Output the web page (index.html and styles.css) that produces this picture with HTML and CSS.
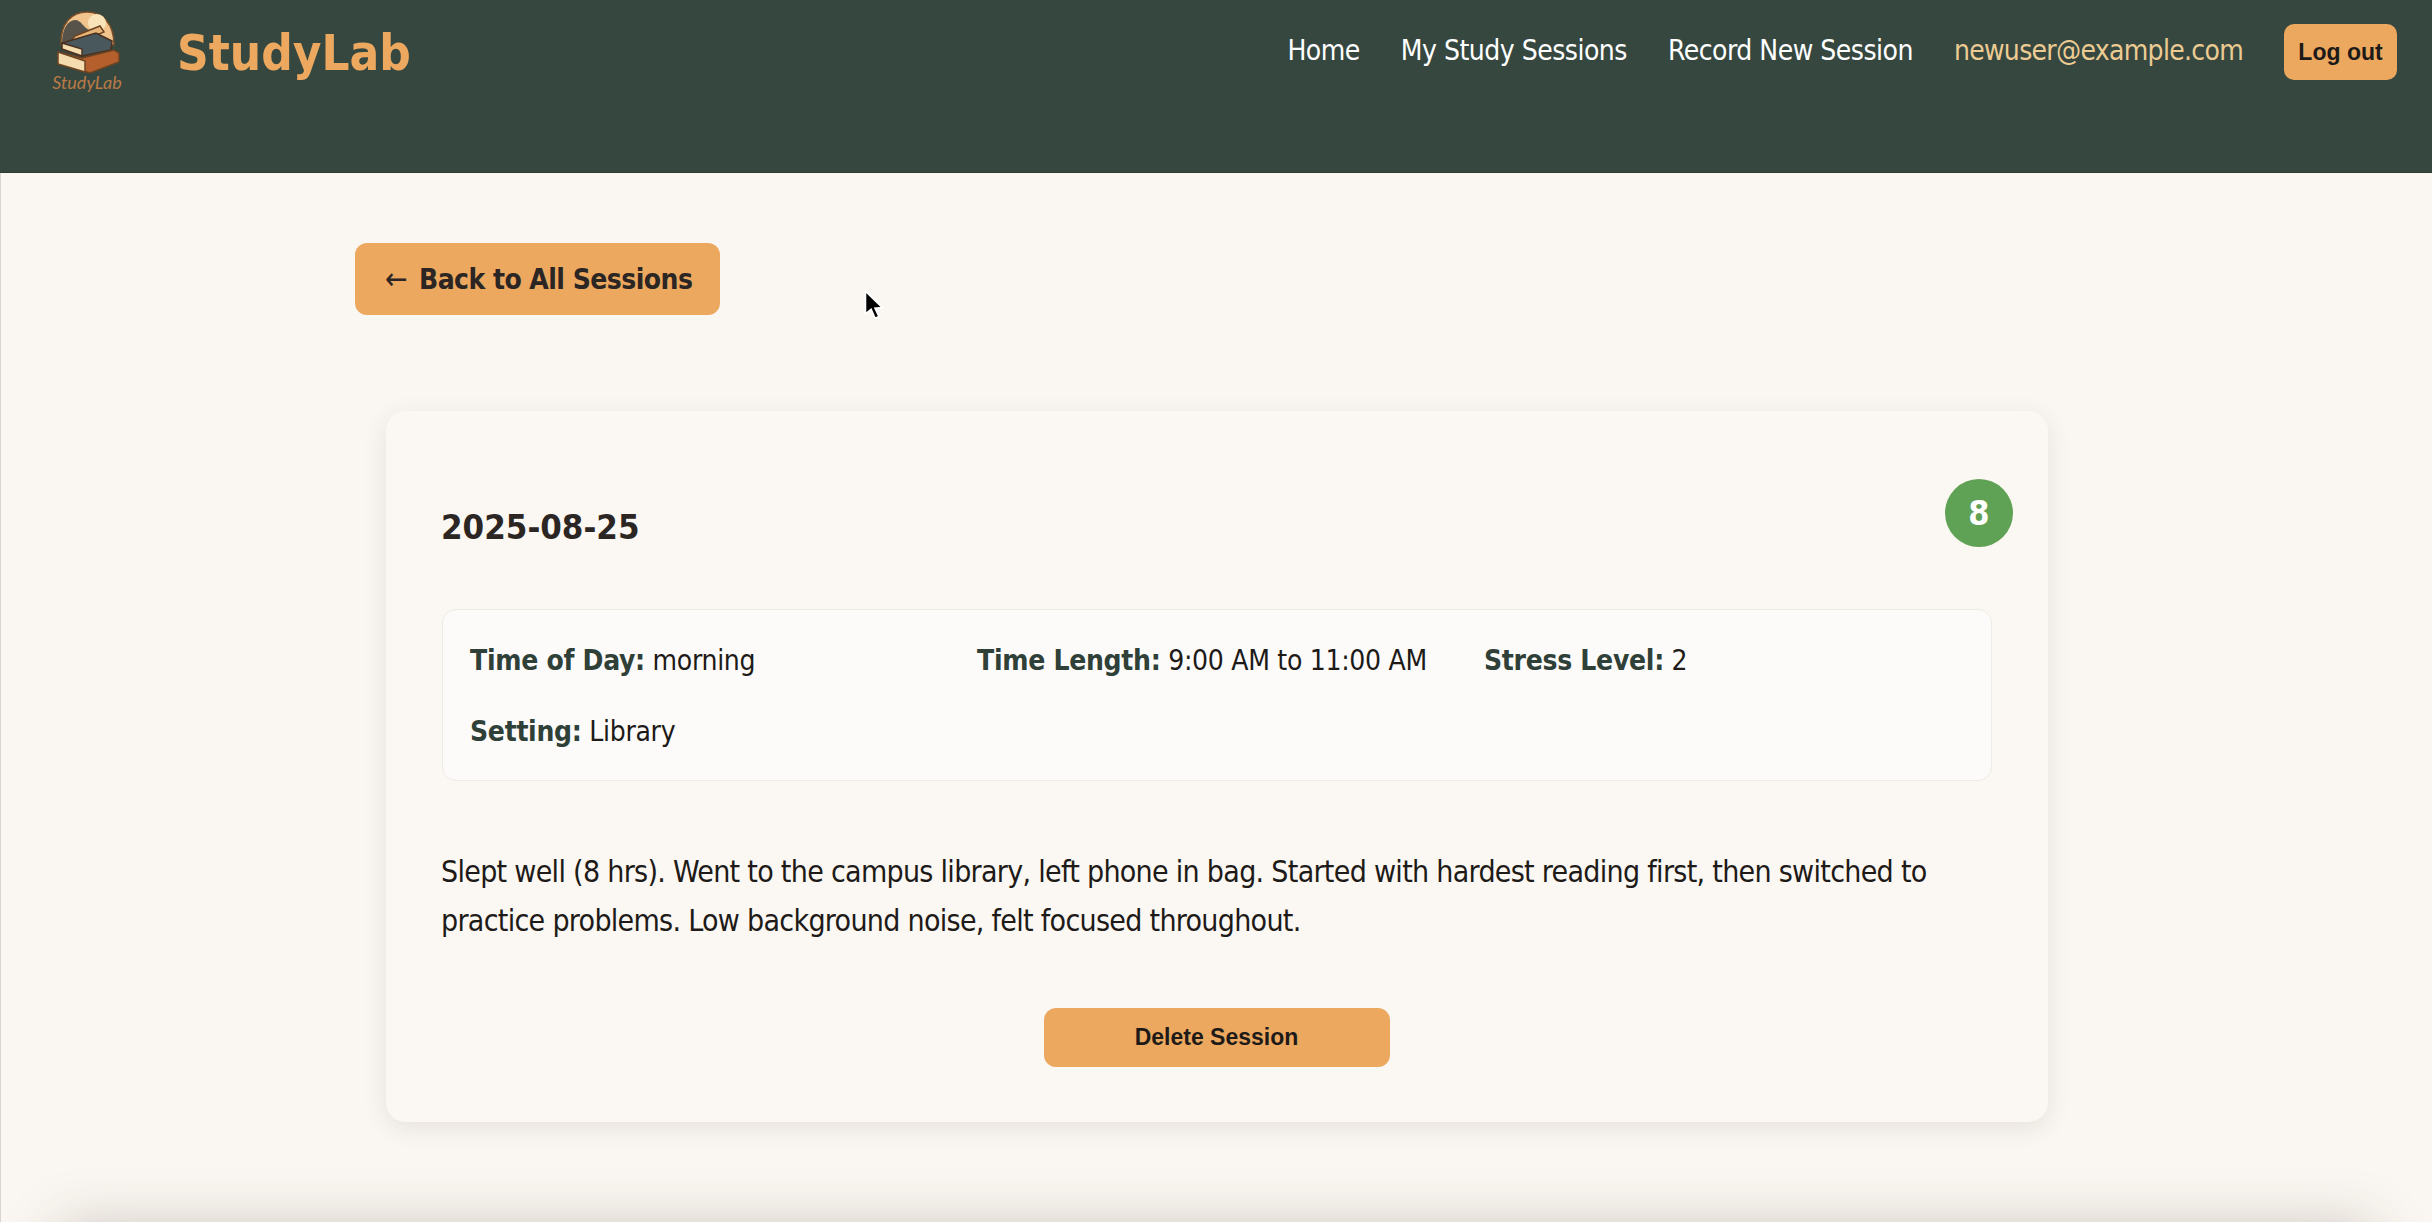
FILE: index.html
```html
<!DOCTYPE html>
<html lang="en">
<head>
<meta charset="UTF-8" />
<title>StudyLab - Session</title>
<link rel="stylesheet" href="styles.css">
</head>
<body>

<header class="site-header">
  <a class="brand" href="#">
    <svg class="brand-logo" viewBox="0 0 90 95" width="90" height="95" aria-hidden="true">
      <path d="M21 40 C20 18 32 7 47 7 C62 7 74 18 74 40 Z" fill="#f0c48c" stroke="#7a4d28" stroke-width="1.5"/>
      <circle cx="57" cy="18" r="9" fill="#f8e4b8"/>
      <path d="M22 38 C22 24 28 15 35 15 C41 15 43 22 49 25 L50 36 Z" fill="#57534a"/>
      <path d="M35 31 L60 21 L64 27 L40 37 L31 36 Z" fill="#e9b577" stroke="#6d4423" stroke-width="1.5"/>
      <path d="M22 38 L56 28 L72 36 L71 45 L42 51 L22 44 Z" fill="#48585c" stroke="#4a3020" stroke-width="1.5"/>
      <path d="M22 38 L42 44 L42 51 L22 44 Z" fill="#f5dcae" stroke="#4a3020" stroke-width="1.5"/>
      <path d="M18 47 L42 53 L74 45 L79 48 L79 57 L50 68 L18 59 Z" fill="#b45f2c" stroke="#6d4423" stroke-width="1.5"/>
      <path d="M18 47 L45 56 L45 67 L18 59 Z" fill="#f5dcae" stroke="#6d4423" stroke-width="1.5"/>
      <text class="logo-text" x="47" y="84" text-anchor="middle">StudyLab</text>
    </svg>
    <span class="brand-name">StudyLab</span>
  </a>
  <nav class="main-nav">
    <a href="#">Home</a>
    <a href="#">My Study Sessions</a>
    <a href="#">Record New Session</a>
    <span class="nav-user">newuser@example.com</span>
    <button class="btn btn-logout">Log out</button>
  </nav>
</header>

<main class="page">
  <a class="btn-back" href="#"><span class="back-arrow">←</span>Back to All Sessions</a>

  <article class="session-card">
    <span class="score-badge">8</span>
    <h2 class="session-date">2025-08-25</h2>

    <div class="session-meta">
      <div><strong>Time of Day:</strong> morning</div>
      <div><strong>Time Length:</strong> 9:00 AM to 11:00 AM</div>
      <div><strong>Stress Level:</strong> 2</div>
      <div><strong>Setting:</strong> Library</div>
    </div>

    <p class="session-notes">Slept well (8 hrs). Went to the campus library, left phone in bag. Started with hardest reading first, then switched to practice problems. Low background noise, felt focused throughout.</p>

    <div class="session-actions">
      <button class="btn btn-delete">Delete Session</button>
    </div>
  </article>

  <footer class="site-footer"></footer>
</main>

<!-- mouse pointer caught in the screenshot -->
<svg class="cursor" viewBox="0 0 20 30" width="23" height="34" aria-hidden="true">
  <path d="M2 1 L2 21 L7 17 L10.5 25 L14 23.5 L10.5 16 L17 15.5 Z" fill="#000" stroke="#fff" stroke-width="1.5"/>
</svg>

</body>
</html>
```

FILE: styles.css
```css
* { box-sizing: border-box; }

html, body { margin: 0; height: 100%; }

body {
  position: relative;
  overflow: hidden;
  background: #faf6f1;
  color: #1d1a18;
  font-family: "DejaVu Sans", "Noto Sans", sans-serif;
  font-stretch: condensed;
}

/* header */
.site-header {
  display: flex;
  justify-content: space-between;
  align-items: flex-start;
  height: 173px;
  padding: 5px 35px 0 40px;
  background: #36473f;
  border-bottom: 1px solid #2a3d38;
}
.brand { display: flex; align-items: flex-start; gap: 47px; text-decoration: none; }
.brand-logo { display: block; }
.logo-text { font-family: "Lato", sans-serif; font-style: italic; font-size: 18px; fill: #b97b46; }
.brand-name {
  margin-top: 20px;
  color: #eca85f;
  font-size: 49px;
  font-weight: 700;
  line-height: 58px;
}

.main-nav { display: flex; align-items: center; gap: 41px; padding-top: 19px; }
.main-nav a,
.nav-user { position: relative; top: -2px; font-size: 28px; letter-spacing: -.5px; }
.main-nav a { color: #fff; text-decoration: none; }
.nav-user { color: #eccb93; letter-spacing: -.7px; }

.btn {
  border: none;
  border-radius: 10px;
  background: #eca85f;
  color: #1d1a18;
  font-family: "Liberation Sans", Arial, sans-serif;
  font-weight: 700;
  font-size: 23px;
}
.btn-logout { width: 113px; height: 56px; }
.btn-delete { width: 346px; height: 59px; border-radius: 12px; }

/* page */
.page {
  height: 1049px;
  padding: 70px 355px 0 354px;
  border-left: 1px solid #d9d6d2;
}

.btn-back {
  display: inline-block;
  width: 365px;
  height: 72px;
  padding-left: 30px;
  border-radius: 12px;
  background: #eca85f;
  color: #2b2623;
  font-size: 28px;
  font-weight: 700;
  letter-spacing: -.55px;
  line-height: 74px;
  text-decoration: none;
  white-space: nowrap;
}
.back-arrow { display: inline-block; width: 34px; font-size: 30px; font-weight: 400; line-height: 1; }

.session-card {
  position: relative;
  width: 1662px;
  margin: 96px 0 0 31px;
  padding: 87px 56px 55px 55px;
  border-radius: 20px;
  background: #fbf7f2;
  box-shadow: 0 6px 24px rgba(60, 50, 40, .1);
}

.score-badge {
  position: absolute;
  top: 68px;
  right: 35px;
  width: 68px;
  height: 68px;
  border-radius: 50%;
  background: #5fa155;
  color: #fff;
  font-size: 34px;
  font-weight: 700;
  line-height: 68px;
  text-align: center;
}

.session-date { margin: 0 0 53px; color: #2b2623; font-size: 34.5px; font-weight: 700; line-height: 58px; }

.session-meta {
  display: grid;
  grid-template-columns: repeat(3, 507px);
  row-gap: 29px;
  height: 172px;
  margin-left: 1px;
  padding: 30px 28px 28px 27px;
  border: 1px solid #efebe6;
  border-radius: 14px;
  background: #fcfbf9;
  font-size: 28px;
  letter-spacing: -.3px;
  line-height: 42px;
}
.session-meta strong { color: #2f4038; }

.session-notes { margin: 66px 0 63px; font-size: 30px; letter-spacing: -.7px; line-height: 49px; }

.session-actions { display: flex; justify-content: center; }

.site-footer {
  height: 60px;
  margin: 108px -295px 0;
  background: #faf6f1;
  box-shadow: 0 0 60px rgba(60, 50, 40, .27);
}

.cursor { position: absolute; left: 863px; top: 290px; }
```
